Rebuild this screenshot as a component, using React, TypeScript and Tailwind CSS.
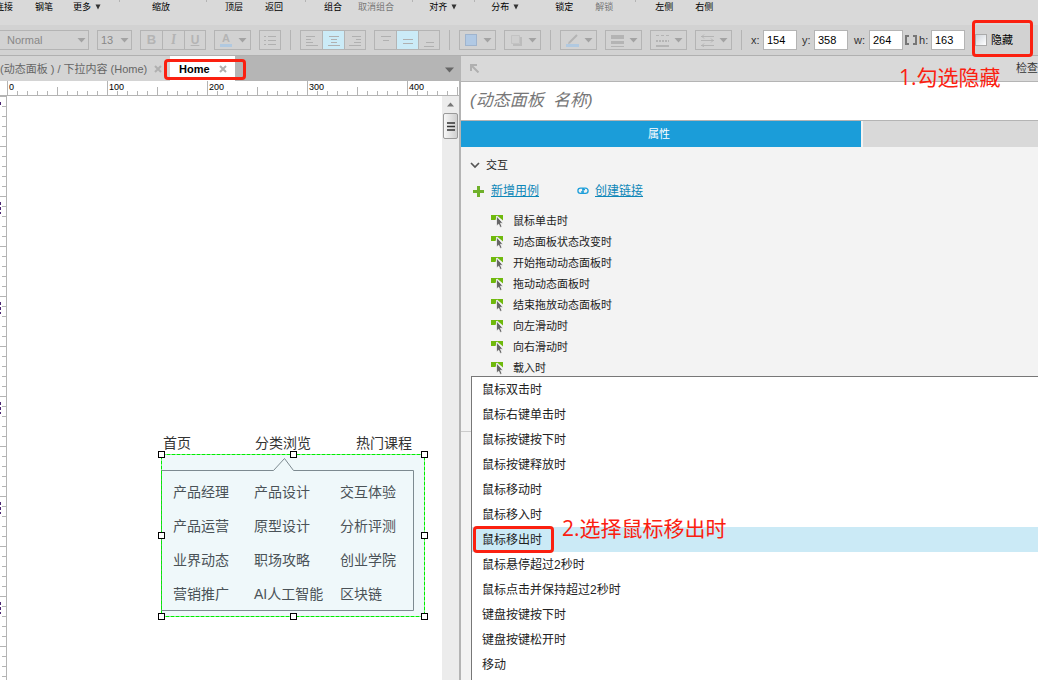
import React from "react"

const menuItems = [
  { label: "连接", space: "-ml-[5px]" },
  { label: "钢笔", space: "ml-[22px]" },
  { label: "更多", space: "ml-5", arrow: true },
  { space: "ml-[18px]" },
  { label: "缩放", space: "ml-8" },
  { space: "ml-9" },
  { label: "顶层", space: "ml-[18px]" },
  { label: "返回", space: "ml-[22px]" },
  { space: "ml-[22px]" },
  { label: "组合", space: "ml-[18px]" },
  { label: "取消组合", space: "ml-4", muted: true },
  { space: "ml-[18px]" },
  { label: "对齐", space: "ml-4", arrow: true },
  { space: "ml-[17px]" },
  { label: "分布", space: "ml-4", arrow: true },
  { label: "锁定", space: "ml-9" },
  { label: "解锁", space: "ml-[22px]", muted: true },
  { space: "ml-[22px]" },
  { label: "左侧", space: "ml-[19px]" },
  { label: "右侧", space: "ml-[22px]" },
]

const events = [
  "鼠标单击时",
  "动态面板状态改变时",
  "开始拖动动态面板时",
  "拖动动态面板时",
  "结束拖放动态面板时",
  "向左滑动时",
  "向右滑动时",
  "载入时",
]

const moreEvents = [
  "鼠标双击时",
  "鼠标右键单击时",
  "鼠标按键按下时",
  "鼠标按键释放时",
  "鼠标移动时",
  "鼠标移入时",
  "鼠标移出时",
  "鼠标悬停超过2秒时",
  "鼠标点击并保持超过2秒时",
  "键盘按键按下时",
  "键盘按键松开时",
  "移动",
]

const courses = [
  "产品经理",
  "产品设计",
  "交互体验",
  "产品运营",
  "原型设计",
  "分析评测",
  "业界动态",
  "职场攻略",
  "创业学院",
  "营销推广",
  "AI人工智能",
  "区块链",
]

const handles = [
  [0, 0],
  [132, 0],
  [263, 0],
  [0, 81],
  [263, 81],
  [0, 162],
  [132, 162],
  [263, 162],
]

const Caret = () => (
  <svg width="9" height="5" className="shrink-0" aria-hidden="true">
    <path d="M0.5 0H8.5L4.5 4.5Z" fill="#a3a3a3" />
  </svg>
)

const Separator = ({ space }: { space: string }) => (
  <div className={`h-5 w-px shrink-0 bg-[#b4b4b4] ${space}`} />
)

const ToolButton = ({
  label,
  active,
  children,
}: {
  label: string
  active?: boolean
  children: React.ReactNode
}) => (
  <button
    aria-label={label}
    className={`flex h-full w-[22px] items-center justify-center last:w-5 ${active ? "bg-[#cbebf7]" : ""}`}
  >
    {children}
  </button>
)

const Group = ({ children }: { children: React.ReactNode }) => (
  <div className="flex h-5 shrink-0 divide-x divide-[#b4b4b4] border border-[#b4b4b4]">
    {children}
  </div>
)

const DropButton = ({
  label,
  children,
}: {
  label: string
  children: React.ReactNode
}) => (
  <button
    aria-label={label}
    className="flex h-5 w-[37px] shrink-0 items-center justify-between border border-[#b4b4b4] pr-[3px] pl-[5px]"
  >
    {children}
    <Caret />
  </button>
)

const Lines = ({ d }: { d: string }) => (
  <svg width="14" height="14" className="shrink-0" aria-hidden="true">
    <path d={d} stroke="#b0b0b0" strokeWidth="1" fill="none" />
  </svg>
)

const Field = ({
  label,
  value,
  space,
}: {
  label: string
  value: string
  space: string
}) => (
  <label
    className={`flex shrink-0 items-center justify-between text-[11px] text-[#333] ${space}`}
  >
    {label}:
    <input
      defaultValue={value}
      className="h-5 w-[34px] border border-[#b4b4b4] bg-white pl-[3px] text-[11px] text-black"
    />
  </label>
)

const Toolbar = () => (
  <header className="shrink-0 bg-[#d9d9d9]">
    <div className="flex h-[25px] overflow-hidden text-[9px] leading-[14px] whitespace-nowrap">
      {menuItems.map((item, i) =>
        item.label ? (
          <button
            key={i}
            className={`flex h-[14px] shrink-0 items-center gap-1 ${item.space} ${item.muted ? "text-[#777]" : "text-black"}`}
          >
            {item.label}
            {item.arrow && (
              <svg width="6" height="6" aria-hidden="true">
                <path d="M0.5 0.5H5.5L3 5.5Z" fill="#333" />
              </svg>
            )}
          </button>
        ) : (
          <span key={i} className={`h-0.5 w-px shrink-0 bg-[#b4b4b4] ${item.space}`} />
        )
      )}
    </div>

    <div className="flex h-[31px] items-center border-b border-[#b0b0b0] bg-[#d2d2d2] text-[11px]">
      <div className="flex shrink-0 items-center gap-2">
        <div className="relative h-5 w-[89px]">
          <select
            aria-label="样式"
            className="h-5 w-full appearance-none border border-l-0 border-[#b4b4b4] pl-[7px] text-[#888]"
          >
            <option>Normal</option>
          </select>
          <span className="pointer-events-none absolute top-2 right-[3px]">
            <Caret />
          </span>
        </div>
        <div className="relative h-5 w-[35px]">
          <select
            aria-label="字号"
            className="h-5 w-full appearance-none border border-[#b4b4b4] pl-[3px] text-[#888]"
          >
            <option>13</option>
          </select>
          <span className="pointer-events-none absolute top-2 right-[3px]">
            <Caret />
          </span>
        </div>
        <Group>
          <ToolButton label="粗体">
            <b className="text-[13px] text-[#b4b4b4]">B</b>
          </ToolButton>
          <ToolButton label="斜体">
            <i className="font-serif text-[13px] font-bold text-[#b4b4b4]">I</i>
          </ToolButton>
          <ToolButton label="下划线">
            <u className="text-[12px] font-bold text-[#b4b4b4]">U</u>
          </ToolButton>
        </Group>
        <DropButton label="文字颜色">
          <span className="flex w-3 flex-col items-center text-[11px] leading-[9px] font-bold text-[#b4b4b4]">
            A
            <span className="mt-px h-[3px] w-3 bg-[#b1c9e0]" />
          </span>
        </DropButton>
        <Group>
          <button aria-label="项目符号" className="flex h-full w-5 items-center justify-center">
            <Lines d="M1 3.5H3M5 3.5H13M1 7.5H3M5 7.5H13M1 11.5H3M5 11.5H13" />
          </button>
        </Group>
      </div>
      <Separator space="ml-[9px]" />
      <div className="ml-[9px] flex shrink-0 gap-2">
        <Group>
          <ToolButton label="左对齐">
            <Lines d="M1 3.5H10M1 6.5H6M1 9.5H8M1 12.5H13" />
          </ToolButton>
          <ToolButton label="居中" active>
            <Lines d="M2 3.5H12M4 6.5H10M4 9.5H10M1 12.5H13" />
          </ToolButton>
          <ToolButton label="右对齐">
            <Lines d="M4 3.5H13M8 6.5H13M6 9.5H13M1 12.5H13" />
          </ToolButton>
        </Group>
        <Group>
          <ToolButton label="顶部对齐">
            <Lines d="M2 3.5H12M4 7.5H10" />
          </ToolButton>
          <ToolButton label="垂直居中" active>
            <Lines d="M2 6.5H12M2 10.5H12" />
          </ToolButton>
          <ToolButton label="底部对齐">
            <Lines d="M4 9.5H12M2 13.5H12" />
          </ToolButton>
        </Group>
      </div>
      <Separator space="ml-[9px]" />
      <div className="ml-[9px] flex shrink-0 gap-2">
        <DropButton label="填充颜色">
          <span className="h-3 w-3 border border-[#9fb4ce] bg-[#b1c9e4]" />
        </DropButton>
        <DropButton label="外部阴影">
          <svg width="13" height="13" aria-hidden="true">
            <path d="M3 10V12H12V3H10V10Z" fill="#bcbcbc" />
            <path d="M1.5 1.5H9.5V9.5H1.5Z" fill="#cfcfcf" stroke="#c3c3c3" />
          </svg>
        </DropButton>
      </div>
      <Separator space="ml-[9px]" />
      <div className="ml-[9px] flex shrink-0 gap-2">
        <DropButton label="线段颜色">
          <svg width="13" height="13" aria-hidden="true">
            <path d="M11 1L4 8" stroke="#b4b4b4" strokeWidth="2" />
            <path d="M3 7L5 9L2 10Z" fill="#b4b4b4" />
            <path d="M0 10H13V13H0Z" fill="#b1c9e0" />
          </svg>
        </DropButton>
        <DropButton label="线宽">
          <svg width="13" height="13" aria-hidden="true">
            <path d="M0 1H13V5H0ZM0 7H13V10H0ZM0 12H13V13H0Z" fill="#b4b4b4" />
          </svg>
        </DropButton>
        <DropButton label="线段类型">
          <svg width="13" height="13" aria-hidden="true">
            <path d="M0 1.5H13" stroke="#b4b4b4" strokeDasharray="3 2" />
            <path d="M0 7H13" stroke="#b4b4b4" strokeWidth="2" strokeDasharray="2 1" />
            <path d="M0 12H13" stroke="#b4b4b4" strokeWidth="2" />
          </svg>
        </DropButton>
        <DropButton label="箭头样式">
          <svg width="13" height="13" aria-hidden="true">
            <path
              d="M0 2.5H13M0 6.5H13M0 11.5H13M3 0.5L1 2.5L3 4.5M10 4.5L12 6.5L10 8.5M3 9.5L1 11.5L3 13"
              stroke="#b4b4b4"
              fill="none"
            />
          </svg>
        </DropButton>
      </div>
      <Separator space="ml-[9px]" />
      <Field label="x" value="154" space="ml-[9px] w-[46px]" />
      <Field label="y" value="358" space="ml-[5px] w-[46px]" />
      <Field label="w" value="264" space="ml-[6px] w-[49px]" />
      <button aria-label="锁定宽高比" className="ml-0.5 shrink-0">
        <svg width="12" height="10" className="block" aria-hidden="true">
          <path d="M4 1H1V9H4M8 1H11V9H8" stroke="#777" strokeWidth="2" fill="none" />
        </svg>
      </button>
      <Field label="h" value="163" space="ml-0.5 w-[46px]" />
      <label className="ml-[10px] flex shrink-0 items-center gap-1 text-[11px] text-black">
        <input
          type="checkbox"
          className="h-3 w-3 appearance-none border border-[#aaa] bg-linear-to-br from-[#cfd4db] to-white"
        />
        隐藏
      </label>
    </div>
  </header>
)

const Tabs = () => (
  <nav className="flex h-[25px] shrink-0 items-center bg-[#b5b5b5] text-[11px] whitespace-nowrap">
    <div className="flex h-full w-[170px] shrink-0 items-center justify-between bg-[#d4d4d4] pt-px pr-2 text-[#666]">
      <button>(动态面板 ) / 下拉内容 (Home)</button>
      <CloseButton />
    </div>
    <div className="flex h-full w-[65px] shrink-0 items-center justify-between bg-white pt-px pr-2 pl-[9px]">
      <button className="font-bold text-black">Home</button>
      <CloseButton />
    </div>
    <button aria-label="全部页面" className="mr-[7px] ml-auto pt-0.5">
      <svg width="9" height="6" aria-hidden="true">
        <path d="M0 0.5H9L4.5 5.5Z" fill="#666" />
      </svg>
    </button>
  </nav>
)

const CloseButton = () => (
  <button aria-label="关闭">
    <svg width="8" height="8" className="block" aria-hidden="true">
      <path d="M1 1L7 7M7 1L1 7" stroke="#b0b0b0" strokeWidth="2" />
    </svg>
  </button>
)

const Ruler = () => (
  <div className="flex h-[15px] shrink-0 overflow-hidden border-b border-[#b4b4b4] bg-white pl-[7px]">
    {[0, 100, 200, 300, 400].map((mark) => (
      <div key={mark} className="relative h-[14px] w-[100px] shrink-0">
        <svg width="100" height="14" className="absolute inset-0" aria-hidden="true">
          <path
            d="M0.5 0V14M10.5 10V14M20.5 10V14M30.5 10V14M40.5 10V14M50.5 6V14M60.5 10V14M70.5 10V14M80.5 10V14M90.5 10V14"
            stroke="#b4b4b4"
          />
        </svg>
        <span className="relative block pl-0.5 text-[9px] leading-3 text-black">{mark}</span>
      </div>
    ))}
  </div>
)

const VerticalRuler = () => (
  <svg width="7" className="h-full shrink-0" aria-hidden="true">
    <defs>
      <pattern id="ticks" width="7" height="50" patternUnits="userSpaceOnUse">
        <path d="M0 0.5H7M2 10.5H7M2 20.5H7M2 30.5H7M2 40.5H7" stroke="#b4b4b4" />
      </pattern>
      <pattern id="digits" width="1" height="100" patternUnits="userSpaceOnUse">
        <path d="M0 6H1V9H0ZM0 11H1V14H0ZM0 16H1V18H0Z" fill="#4b2472" />
      </pattern>
    </defs>
    <rect width="7" height="100%" fill="url(#ticks)" />
    <rect y="100" width="1" height="100%" fill="url(#digits)" />
    <rect y="6" width="1" height="3" fill="#4b2472" />
    <rect x="6" width="1" height="100%" fill="#b4b4b4" />
  </svg>
)

const Canvas = () => (
  <div className="relative min-w-0 flex-1 overflow-hidden bg-white text-[14px] leading-5 text-[#333]">
    <span className="absolute top-[337px] left-[156px]">首页</span>
    <span className="absolute top-[337px] left-[248px]">分类浏览</span>
    <span className="absolute top-[337px] left-[349px]">热门课程</span>

    {/* selected panel */}
    <div className="absolute top-[358px] left-[154px] h-[163px] w-[264px] bg-[#eff8fa]">
      <svg width="264" height="163" className="absolute inset-0 overflow-visible" aria-hidden="true">
        <path d="M0.5 16.5H112.5L123.5 4.5L132.5 16.5H252.5V156.5H0.5Z" stroke="#7d8a90" fill="none" />
        <rect x="0.5" y="0.5" width="263" height="162" stroke="#00ee00" strokeDasharray="4 1" fill="none" />
        {handles.map(([x, y]) => (
          <rect key={`${x}-${y}`} x={x - 2.5} y={y - 2.5} width="6" height="6" stroke="#000" fill="#fff" />
        ))}
      </svg>
      <div className="relative grid grid-cols-[81px_86px_84px] gap-y-[14px] pt-7 pl-3 whitespace-nowrap text-[#4a5257]">
        {courses.map((course) => (
          <span key={course}>{course}</span>
        ))}
      </div>
    </div>
  </div>
)

const Scrollbar = () => (
  <div className="flex w-[17px] shrink-0 flex-col items-center bg-[#ececec]">
    <button aria-label="向上滚动" className="flex h-[17px] items-center">
      <svg width="7" height="5" aria-hidden="true">
        <path d="M0 4.5L3.5 0.5L7 4.5Z" fill="#777" />
      </svg>
    </button>
    <div className="flex h-[26px] w-[15px] items-center justify-center rounded-xs border border-[#999] bg-linear-to-r from-[#f7f7f7] to-[#cfcfcf]">
      <svg width="8" height="9" aria-hidden="true">
        <path d="M0 1H8M0 4.5H8M0 8H8" stroke="#333" strokeWidth="1.5" />
      </svg>
    </div>
  </div>
)

const EventIcon = () => (
  <svg width="13" height="13" aria-hidden="true">
    <path d="M0 0H12V5.5L6 0.5L4.5 5H0Z" fill="#6fb90d" />
    <path d="M5.5 1V11L7.7 9.2L9.2 12.5L11 11.7L9.5 8.2H12Z" fill="#666" stroke="#f3f3f3" strokeWidth="0.8" />
  </svg>
)

const Inspector = () => (
  <aside className="flex min-w-0 flex-1 flex-col bg-[#f3f3f3]">
    <div className="flex h-[26px] shrink-0 items-center justify-between overflow-hidden border-b border-[#b4b4b4] bg-[#d9d9d9] pl-[9px]">
      <button aria-label="返回上级">
        <svg width="10" height="9" aria-hidden="true">
          <path d="M1 7V1H7M1.5 1.5L8.5 8.5" stroke="#b0b0b0" strokeWidth="2" fill="none" />
        </svg>
      </button>
      <h2 className="text-[11px] text-[#333]">检查</h2>
    </div>
    <input
      aria-label="名称"
      placeholder="(动态面板  名称)"
      className="h-[39px] w-full shrink-0 border-b border-[#b4b4b4] bg-white pl-[9px] text-[17px] italic placeholder:text-[#777]"
    />
    <div className="flex h-[26px] shrink-0 text-[11px]">
      <button className="flex-[399] bg-[#1b9dd9] pr-1 text-white">属性</button>
      <button aria-label="样式" className="ml-0.5 flex-[176] bg-[#d9d9d9]" />
    </div>

    <div className="relative flex-1 text-[#222]">
      <button className="mt-[9px] ml-[9px] flex h-[18px] items-center gap-1.5 text-[11px]">
        <svg width="10" height="7" aria-hidden="true">
          <path d="M1 1L5 5L9 1" stroke="#555" strokeWidth="1.7" fill="none" />
        </svg>
        交互
      </button>
      <div className="mt-2 flex h-[18px] items-center pl-3 text-[12px] text-[#0e87b8]">
        <svg width="11" height="11" className="shrink-0" aria-hidden="true">
          <path d="M5.5 0V11M0 5.5H11" stroke="#6fb02a" strokeWidth="3" />
        </svg>
        <a href="#case" className="ml-[7px] underline">
          新增用例
        </a>
        <svg width="12" height="8" className="ml-[38px] shrink-0" aria-hidden="true">
          <path
            d="M8 2.7H5.5M6.5 1.2H3.5A2.6 2.6 0 0 0 3.5 6.4H5A1.7 1.7 0 0 0 6 3.8M5.5 6.4H8.5A2.6 2.6 0 0 0 8.5 1.2H7A1.7 1.7 0 0 0 6 3.8M4 4.9H6"
            stroke="#1b9dd9"
            strokeWidth="1.3"
            fill="none"
          />
        </svg>
        <a href="#link" className="ml-1.5 underline">
          创建链接
        </a>
      </div>
      <ul className="mt-[11px] pl-[30px] text-[11px]">
        {events.map((event) => (
          <li key={event} className="flex h-[21px] items-center gap-[9px]">
            <EventIcon />
            {event}
          </li>
        ))}
      </ul>
      <hr className="mt-[52px] border-[#ccc]" />

      {/* more events menu */}
      <ul className="absolute top-[229px] right-0 left-[10px] h-[400px] border-t border-l border-[#777] bg-white text-[12px]">
        {moreEvents.map((event, i) => (
          <li key={event} className={i === 6 ? "bg-[#cbeaf6]" : ""}>
            <button className="block h-[25px] w-full pl-[10px] text-left">{event}</button>
          </li>
        ))}
      </ul>
    </div>
  </aside>
)

export default function App() {
  return (
    <div className="relative flex h-screen flex-col overflow-hidden font-['Liberation_Sans','Noto_Sans_CJK_SC',sans-serif]">
      <Toolbar />
      <main className="flex min-h-0 flex-1">
        <section className="flex w-[461px] shrink-0 flex-col">
          <Tabs />
          <div className="flex min-h-0 flex-1 flex-col border-r-2 border-[#b4b4b4]">
            <Ruler />
            <div className="flex min-h-0 flex-1">
              <VerticalRuler />
              <Canvas />
              <Scrollbar />
            </div>
          </div>
        </section>
        <Inspector />
      </main>

      {/* step annotations */}
      <div className="pointer-events-none absolute top-[59px] left-[164px] h-[21px] w-[82px] rounded-sm border-3 border-[#fb2010]" />
      <div className="pointer-events-none absolute top-5 left-[972px] h-[37px] w-[61px] rounded-sm border-3 border-[#fb2010]" />
      <div className="pointer-events-none absolute top-[526px] left-[473px] h-[27px] w-[81px] rounded-sm border-3 border-[#fb2010]" />
      <p className="pointer-events-none absolute top-[62px] left-[899px] font-['Open_Sans','Noto_Sans_CJK_SC',sans-serif] text-[21px] leading-[30px] whitespace-nowrap text-[#fb2010]">
        1.勾选隐藏
      </p>
      <p className="pointer-events-none absolute top-[513px] left-[562px] font-['Open_Sans','Noto_Sans_CJK_SC',sans-serif] text-[21px] leading-[30px] whitespace-nowrap text-[#fb2010]">
        2.选择鼠标移出时
      </p>
    </div>
  )
}
